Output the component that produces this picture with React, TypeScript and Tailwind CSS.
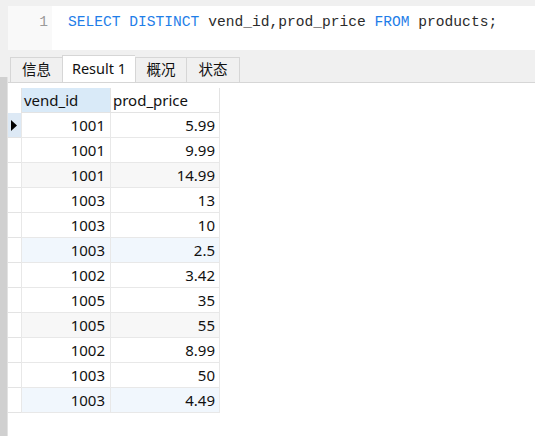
const rows: [string, string][] = [
  ["1001", "5.99"],
  ["1001", "9.99"],
  ["1001", "14.99"],
  ["1003", "13"],
  ["1003", "10"],
  ["1003", "2.5"],
  ["1002", "3.42"],
  ["1005", "35"],
  ["1005", "55"],
  ["1002", "8.99"],
  ["1003", "50"],
  ["1003", "4.49"],
];

const tabs = [
  { label: "信息", w: "w-[52px]" },
  { label: "Result 1", w: "w-[73px]", active: true },
  { label: "概况", w: "w-[51px]" },
  { label: "状态", w: "w-[54px]" },
];

function rowBg(i: number) {
  if (i % 6 === 2) return "bg-[#f7f7f7]";
  if (i % 6 === 5) return "bg-[#f1f7fd]";
  return "bg-white";
}

export default function App() {
  return (
    <div className="w-[535px] h-[436px] bg-[#f0f0f0] flex flex-col overflow-hidden font-['Noto_Sans','Noto_Sans_CJK_SC',sans-serif] text-[#111]">
      {/* Editor */}
      <div className="mt-[6px] ml-[8px] h-[44px] flex">
        <div className="w-[44px] bg-[#f9f9f9] text-right pr-[4px] pt-[6px] font-['Liberation_Mono',monospace] text-[14.6px] leading-[20px] text-[#9a9a9a]">
          1
        </div>
        <div className="flex-1 bg-white pl-[16px] pt-[6px] font-['Liberation_Mono',monospace] text-[14.6px] leading-[20px] whitespace-pre text-[#2b2b2b]">
          <span className="text-[#1f7ee8]">SELECT DISTINCT</span> vend_id,prod_price{" "}
          <span className="text-[#1f7ee8]">FROM</span> products;
        </div>
      </div>

      <div className="flex-1 flex">
        {/* Left splitter */}
        <div className="w-[8px] flex flex-col">
          <div className="h-[27px] bg-[#f0f0f0]" />
          <div className="flex-1 bg-[#d0d0d0] border-r border-[#e2e2e2]" />
        </div>

        <div className="flex-1 flex flex-col">
          {/* Tabs */}
          <div className="h-[33px] bg-[#f0f0f0] pl-[2px] border-b border-[#d6d6d6] flex items-end">
            {tabs.map((t, i) => (
              <div
                key={t.label}
                className={`${t.w} flex items-center justify-center text-[14.5px] border-t border-l border-[#d6d6d6] ${
                  i === tabs.length - 1 ? "border-r" : ""
                } ${t.active ? "h-[27px] bg-white" : "h-[25px] bg-[#f0f0f0]"}`}
              >
                {t.label}
              </div>
            ))}
          </div>

          {/* Grid */}
          <div className="flex-1 bg-white pt-[5px]">
            <div className="flex h-[25px] text-[15px] leading-[25px]">
              <div className="w-[13px]" />
              <div className="w-[89px] bg-[#d9eaf8] border-l border-b border-[#e3e3e3] pl-[2px]">
                vend_id
              </div>
              <div className="w-[110px] border-l border-r border-b border-[#e3e3e3] pl-[2px]">
                prod_price
              </div>
            </div>
            {rows.map(([id, price], i) => (
              <div key={i} className="flex h-[25px] text-[15px] leading-[24px]">
                <div
                  className={`w-[13px] border-b border-[#e3e3e3] flex items-center pl-[3px] ${
                    i === 0 ? "bg-[#dde9f5]" : "bg-white"
                  }`}
                >
                  {i === 0 && (
                    <svg width="6" height="11" viewBox="0 0 6 11">
                      <polygon points="0,0 6,5.5 0,11" fill="#000" />
                    </svg>
                  )}
                </div>
                <div className={`w-[89px] border-l border-b border-[#e8e8e8] text-right pr-[5px] ${rowBg(i)}`}>
                  {id}
                </div>
                <div className={`w-[110px] border-l border-r border-b border-[#e8e8e8] text-right pr-[4px] ${rowBg(i)}`}>
                  {price}
                </div>
              </div>
            ))}
          </div>
        </div>
      </div>
    </div>
  );
}
